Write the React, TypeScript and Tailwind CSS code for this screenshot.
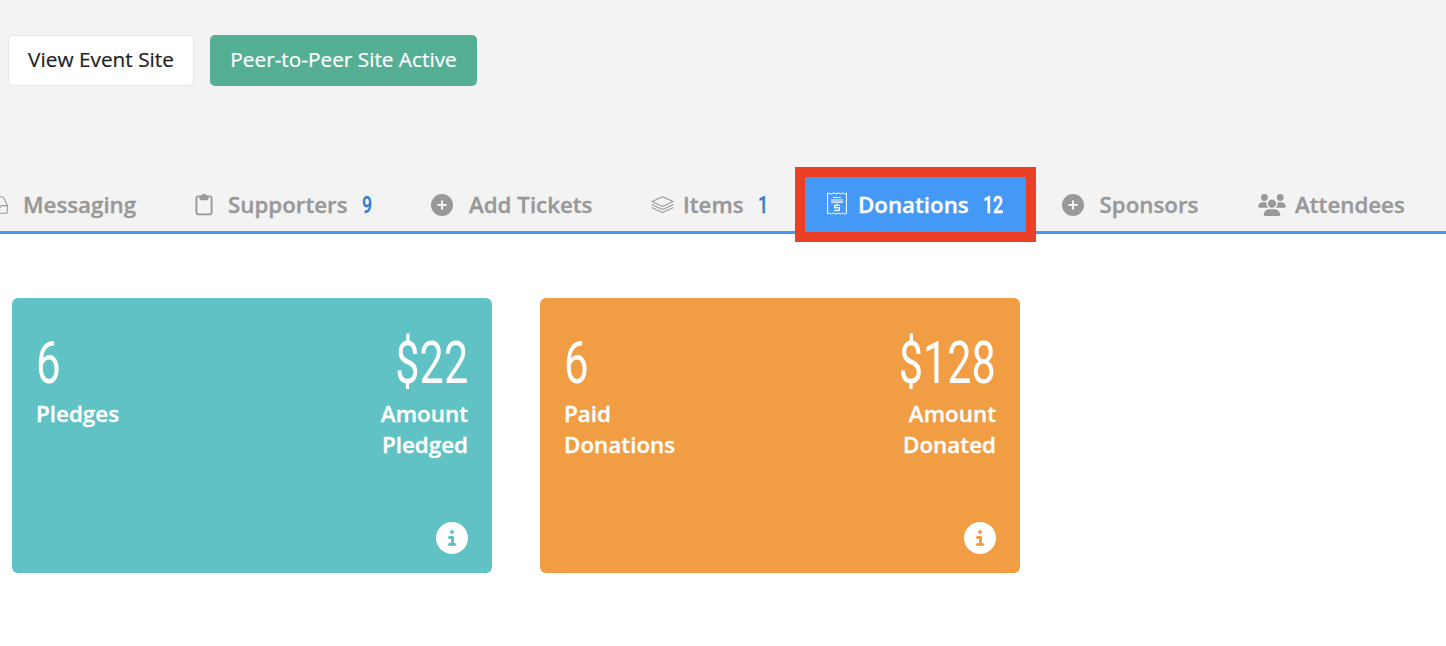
import type { ReactNode } from "react";
import clsx from "clsx";
import { FaCircleInfo, FaCirclePlus, FaUsers } from "react-icons/fa6";

function DrawerIcon() {
  return (
    <svg className="-ml-[14px] shrink-0" width="22" height="18" viewBox="0 0 22 18" fill="none" stroke="currentColor" strokeWidth="1.1">
      <path d="M.6 9.6L4.2 2Q4.7.7 6 .7h10q1.3 0 1.8 1.3L21.3 9.6v6.6q0 1-1 1H1.6q-1 0-1-1zM.6 9.6h6.2q.6 2.6 3 2.6h2.4q2.4 0 3-2.6h6.1" />
    </svg>
  );
}

function ClipboardIcon() {
  return (
    <svg className="shrink-0" width="18" height="23" viewBox="0 0 18 23" fill="none">
      <rect x="1.4" y="3.4" width="15.2" height="18" rx="2.2" stroke="currentColor" strokeWidth="1.9" />
      <path
        fill="currentColor"
        fillRule="evenodd"
        d="M4.5 2.8h1.9a2.7 2.7 0 0 1 5.2 0h1.9v3q0 1.4-1.4 1.4H5.9q-1.4 0-1.4-1.4zM9 2.3a1 1 0 1 0 0 2 1 1 0 1 0 0-2z"
      />
    </svg>
  );
}

function LayersIcon() {
  return (
    <svg className="shrink-0" width="23" height="18" viewBox="0 0 23 18" fill="none" stroke="currentColor" strokeWidth="1.1" strokeLinejoin="round">
      <path d="M11.5.7L22 5.6l-10.500 4.900L1 5.600z" />
      <path d="M.6 8.400L11.500 13.400l10.900-5M.6 11.600l10.900 5 10.900-5" />
    </svg>
  );
}

function ReceiptIcon() {
  return (
    <svg className="mb-[3px] shrink-0" width="20" height="23" viewBox="0 0 20 23" fill="none" stroke="currentColor">
      <path
        d="M.6 1v21l1.600-1.100 2.300 1.300 2.200-1.300L9 22.200l2.200-1.300 2.200 1.300 2.200-1.300 2.200 1.300 1.600-.800V1l-1.600 1.100L15.600.8l-2.200 1.300L11.200.8 9 2.100 6.700.8 4.500 2.100z"
        strokeWidth="1"
      />
      <path d="M6 5.500h8M4 8h12M4 10.200h12" strokeWidth="1.200" />
      <path d="M10 11.800v1M10 18.300v1.200M12.800 13.300H7.600v2.400h4.800v2.600H7.100" strokeWidth="1.200" />
    </svg>
  );
}

interface TabProps {
  icon: ReactNode;
  label: string;
  count?: string;
  className?: string;
  labelClass?: string;
}

function Tab({ icon, label, count, className, labelClass }: TabProps) {
  return (
    <a
      className={clsx(
        "flex h-[75px] shrink-0 items-center text-[22.3px] font-semibold text-[#999999] [-webkit-text-stroke:0.35px]",
        className
      )}
    >
      {icon}
      <span className={labelClass}>{label}</span>
      {count && <Count value={count} />}
    </a>
  );
}

function Count({ value, active }: { value: string; active?: boolean }) {
  return (
    <span
      className={clsx(
        "ml-[14px] origin-left scale-x-[.74] font-['Roboto',sans-serif] text-[24px] font-medium",
        active ? "text-white" : "text-[#337fc9]"
      )}
    >
      {value}
    </span>
  );
}

interface StatCardProps {
  count: string;
  countLabel: ReactNode;
  amount: string;
  amountLabel: ReactNode;
  color: string;
}

function StatCard({ count, countLabel, amount, amountLabel, color }: StatCardProps) {
  return (
    <div className={clsx("flex h-[275px] w-[480px] flex-col justify-between rounded-md px-6 pt-[33px] pb-[19px] text-white", color)}>
      <div className="flex justify-between text-[22.4px] leading-[31px] font-semibold">
        <div>
          <p className="h-[67px] origin-left scale-x-[.73] font-['Roboto',sans-serif] text-[60px] leading-[64px] font-normal">{count}</p>
          <p className="[-webkit-text-stroke:0.35px]">{countLabel}</p>
        </div>
        <div className="flex flex-col items-end text-right">
          <p className="h-[67px] origin-right scale-x-[.72] font-['Roboto',sans-serif] text-[60px] leading-[64px] font-normal">{amount}</p>
          <p className="[-webkit-text-stroke:0.35px]">{amountLabel}</p>
        </div>
      </div>
      <FaCircleInfo className="size-8 self-end" />
    </div>
  );
}

export default function App() {
  return (
    <div className="h-[646px] w-[1446px] overflow-hidden bg-white font-['Open_Sans',sans-serif]">
      <header className="h-[234px] border-b-[3px] border-[#4499f7] bg-[#f3f3f3] pt-[35px]">
        <div className="flex gap-4 pl-2 text-[20.8px] [-webkit-text-stroke:0.2px]">
          <button className="h-[51px] w-[186px] rounded-[5px] border border-[#e7e7e7] bg-white pb-0.5 text-[#222222]">View Event Site</button>
          <button className="h-[51px] w-[267px] rounded-[5px] bg-[#54af95] pb-0.5 text-white">Peer-to-Peer Site Active</button>
        </div>
        <nav className="mt-[81px] flex items-start">
          <Tab className="w-[195px]" icon={<DrawerIcon />} label="Messaging" labelClass="ml-[15px]" />
          <Tab className="w-[236px]" icon={<ClipboardIcon />} label="Supporters" labelClass="ml-[15px]" count="9" />
          <Tab
            className="w-[220px]"
            icon={<FaCirclePlus className="size-[22px]" />}
            label="Add Tickets"
            labelClass="ml-4"
          />
          <Tab className="w-[144px]" icon={<LayersIcon />} label="Items" labelClass="ml-[9px]" count="1" />
          <a className="flex h-[75px] w-[241px] shrink-0 items-center border-10 border-[#eb4026] bg-[#4499f7] pl-[22px] text-[22.3px] font-semibold text-white [-webkit-text-stroke:0.35px]">
            <ReceiptIcon />
            <span className="ml-[11px]">Donations</span>
            <Count value="12" active />
          </a>
          <Tab
            className="w-[222px] pl-[25.500px]"
            icon={<FaCirclePlus className="size-[22px]" />}
            label="Sponsors"
            labelClass="ml-4"
          />
          <Tab icon={<FaUsers className="h-[22px] w-7" />} label="Attendees" labelClass="ml-[9px]" />
        </nav>
      </header>
      <main className="flex gap-12 pt-16 pl-3">
        <StatCard
          color="bg-[#60c2c5]"
          count="6"
          countLabel="Pledges"
          amount="$22"
          amountLabel={<>Amount<br />Pledged</>}
        />
        <StatCard
          color="bg-[#f19d44]"
          count="6"
          countLabel={<>Paid<br />Donations</>}
          amount="$128"
          amountLabel={<>Amount<br />Donated</>}
        />
      </main>
    </div>
  );
}
